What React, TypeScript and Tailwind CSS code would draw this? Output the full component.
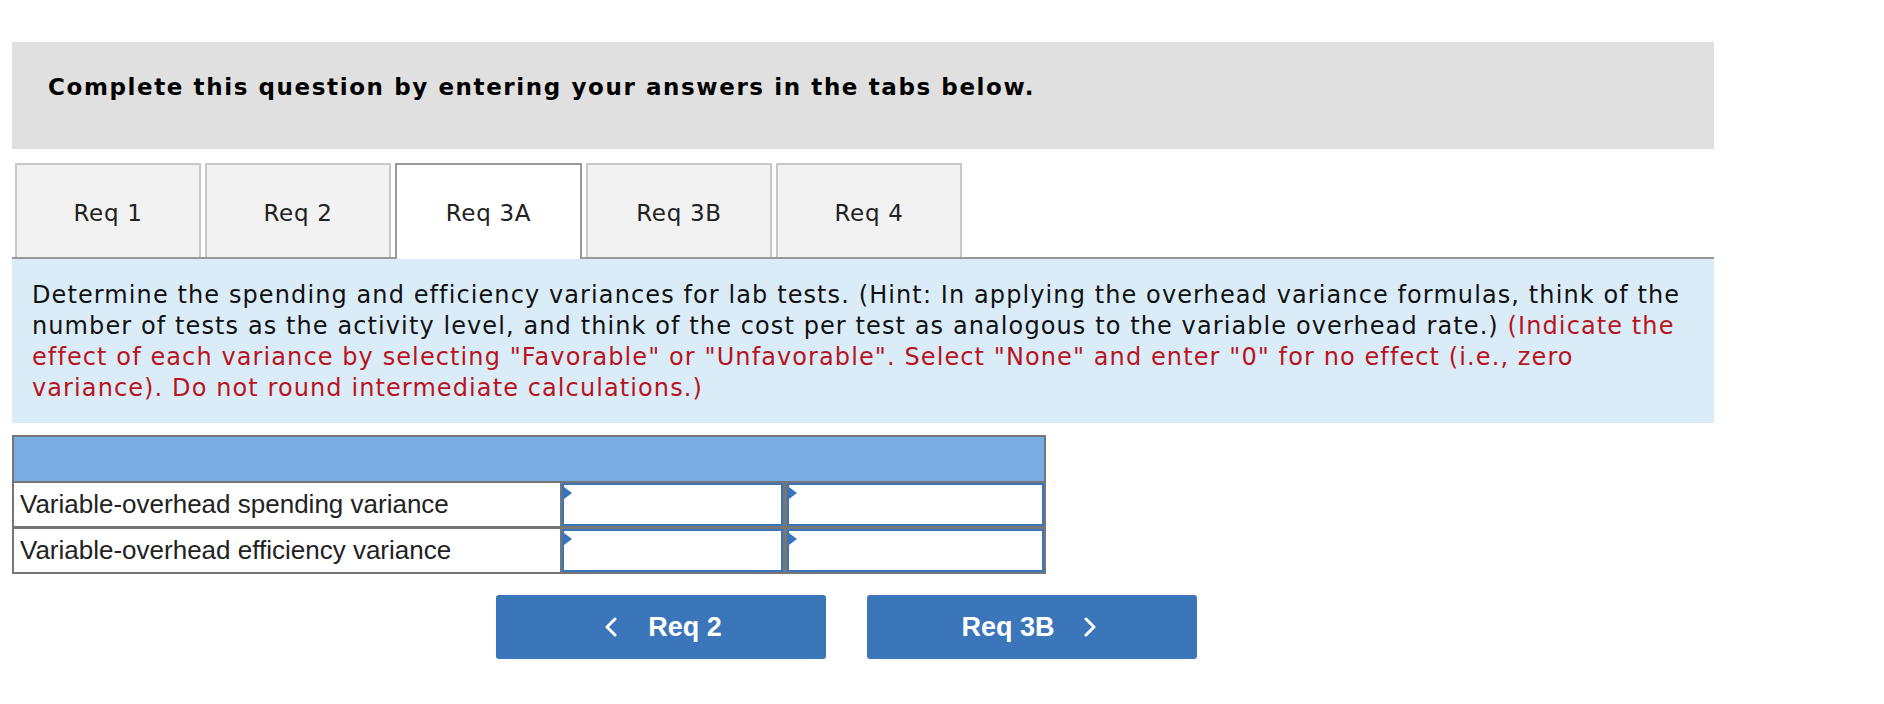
import React from "react";

const tabs = ["Req 1", "Req 2", "Req 3A", "Req 3B", "Req 4"];

function Chevron({ dir }: { dir: "left" | "right" }) {
  return (
    <svg width="14" height="20" viewBox="0 0 14 20" className="shrink-0">
      {dir === "left" ? (
        <polyline points="11,2 3,10 11,18" fill="none" stroke="white" strokeWidth="3" strokeLinecap="round" strokeLinejoin="round" />
      ) : (
        <polyline points="3,2 11,10 3,18" fill="none" stroke="white" strokeWidth="3" strokeLinecap="round" strokeLinejoin="round" />
      )}
    </svg>
  );
}

function InputCell({ className }: { className: string }) {
  return (
    <div className={`relative bg-white border-2 border-[#3a75b9] ${className}`}>
      <svg width="8" height="12" viewBox="0 0 8 12" className="absolute left-0 top-[2px]">
        <polygon points="0,0 8,6 0,12" fill="#3a75b9" />
      </svg>
    </div>
  );
}

export default function App() {
  return (
    <div className="w-[1884px] h-[704px] bg-white pt-[42px] pl-[12px]" style={{ fontFamily: '"DejaVu Sans", Verdana, sans-serif' }}>
      <div className="w-[1702px]">
        <div className="h-[107px] bg-[#e0e0e0] pl-[36px] pt-[32px]">
          <div className="text-[23px] leading-[26px] font-bold tracking-[1.6px] text-black">
            Complete this question by entering your answers in the tabs below.
          </div>
        </div>

        <div className="mt-[14px] flex gap-[4px] pl-[3px] h-[94px]">
          {tabs.map((t, i) =>
            i === 2 ? (
              <div key={t} className="relative z-10 w-[187px] h-[96px] bg-white border-2 border-b-0 border-[#999] flex items-center justify-center pt-[2px] text-[23px] tracking-[0.7px] text-[#222]">
                {t}
              </div>
            ) : (
              <div key={t} className="w-[186px] h-[94px] bg-[#f2f2f2] border-2 border-b-0 border-[#c8c8c8] flex items-center justify-center pt-[4px] text-[23px] tracking-[0.7px] text-[#222]">
                {t}
              </div>
            )
          )}
        </div>

        <div className="h-[166px] bg-[#dbecf9] border-t-2 border-[#999] pl-[20px] pr-[4px] pt-[21px] text-[24px] leading-[31px] tracking-[1.1px] text-[#111]">
          <span className="whitespace-nowrap">Determine the spending and efficiency variances for lab tests. (Hint: In applying the overhead variance formulas, think of the</span>
          <br />
          <span className="whitespace-nowrap">number of tests as the activity level, and think of the cost per test as analogous to the variable overhead rate.){" "}
          <span className="text-[#b9141c]">(Indicate the</span></span>
          <br />
          <span className="whitespace-nowrap text-[#b9141c]">effect of each variance by selecting "Favorable" or "Unfavorable". Select "None" and enter "0" for no effect (i.e., zero</span>
          <br />
          <span className="whitespace-nowrap text-[#b9141c]">variance). Do not round intermediate calculations.)</span>
        </div>

        <div className="mt-[12px] w-[1034px] bg-[#767676] p-[2px]">
          <div className="h-[44px] bg-[#7aace4]" />
          <div className="mt-[2px] flex h-[43px]">
            <div className="w-[546px] bg-white flex items-center pl-[6px] text-[26px] text-[#222]" style={{ fontFamily: '"Liberation Sans", Arial, sans-serif' }}>
              Variable-overhead spending variance
            </div>
            <InputCell className="ml-[2px] w-[221px]" />
            <InputCell className="ml-[4px] flex-1" />
          </div>
          <div className="mt-[3px] flex h-[43px]">
            <div className="w-[546px] bg-white flex items-center pl-[6px] text-[26px] text-[#222]" style={{ fontFamily: '"Liberation Sans", Arial, sans-serif' }}>
              Variable-overhead efficiency variance
            </div>
            <InputCell className="ml-[2px] w-[221px]" />
            <InputCell className="ml-[4px] flex-1" />
          </div>
        </div>

        <div className="mt-[21px] flex gap-[41px] pl-[484px]" style={{ fontFamily: '"Liberation Sans", Arial, sans-serif' }}>
          <div className="w-[330px] h-[64px] rounded-[3px] bg-[#3a76b9] flex items-center justify-center gap-[30px] text-white font-bold text-[27px] pl-[4px]">
            <Chevron dir="left" />
            <span>Req 2</span>
          </div>
          <div className="w-[330px] h-[64px] rounded-[3px] bg-[#3a76b9] flex items-center justify-center gap-[28px] text-white font-bold text-[27px] pr-[6px]">
            <span>Req 3B</span>
            <Chevron dir="right" />
          </div>
        </div>
      </div>
    </div>
  );
}
